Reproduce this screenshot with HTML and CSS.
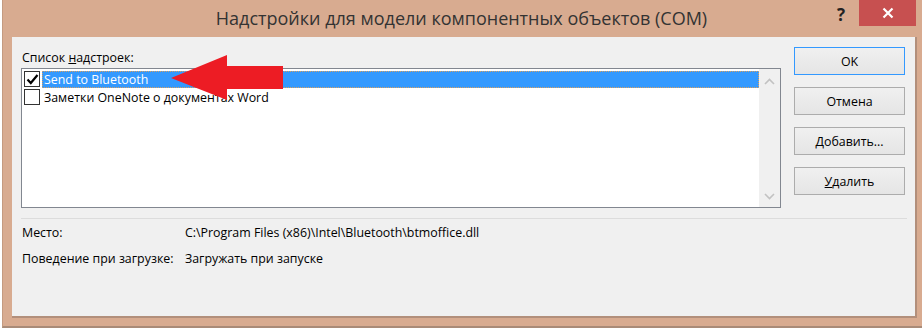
FILE: index.html
```html
<!DOCTYPE html>
<html lang="ru">
<head>
    <meta charset="UTF-8">
    <title>Надстройки для модели компонентных объектов (COM)</title>
    <link rel="stylesheet" href="styles.css">
</head>
<body>
    <div class="window">
        <div class="titlebar">
            <div></div>
            <div class="title">Надстройки для модели компонентных объектов (COM)</div>
            <div class="controls">
                <span class="help">?</span>
                <span class="close">
                    <svg width="12" height="12" viewBox="0 0 12 12"><path d="M1.5 1.5 L10.5 10.5 M10.5 1.5 L1.5 10.5" stroke="#fff" stroke-width="2.2"/></svg>
                </span>
            </div>
        </div>

        <div class="client">
            <div class="top">
                <div class="list-area">
                    <div class="list-label">Список <u>н</u>адстроек:</div>
                    <div class="listbox">
                        <div class="rows">
                            <div class="row">
                                <span class="check checked">
                                    <svg width="13" height="13" viewBox="0 0 13 13"><path d="M1.5 6.5 L4.8 10 L11.5 2" stroke="#000" stroke-width="2.2" fill="none"/></svg>
                                </span>
                                <span class="item selected">Send to Bluetooth</span>
                            </div>
                            <div class="row">
                                <span class="check"></span>
                                <span class="item">Заметки OneNote о документах Word</span>
                            </div>
                        </div>
                        <div class="scrollbar">
                            <svg width="11" height="7" viewBox="0 0 11 7"><path d="M1 6 L5.5 1.5 L10 6" stroke="#c2c2c2" stroke-width="1.6" fill="none"/></svg>
                            <svg width="11" height="7" viewBox="0 0 11 7"><path d="M1 1 L5.5 5.5 L10 1" stroke="#c2c2c2" stroke-width="1.6" fill="none"/></svg>
                        </div>
                    </div>
                </div>

                <div class="buttons">
                    <button class="default">OK</button>
                    <button>Отмена</button>
                    <button><u>Д</u>обавить...</button>
                    <button><u>У</u>далить</button>
                </div>
            </div>

            <div class="separator"></div>

            <div class="info">
                <div class="info-row">
                    <span class="info-name">Место:</span>
                    <span>C:\Program Files (x86)\Intel\Bluetooth\btmoffice.dll</span>
                </div>
                <div class="info-row">
                    <span class="info-name">Поведение при загрузке:</span>
                    <span>Загружать при запуске</span>
                </div>
            </div>
        </div>

        <!-- red annotation arrow drawn over the dialog -->
        <svg class="arrow" width="922" height="328" viewBox="0 0 922 328">
            <polygon points="171,78 227,55 227,66 283,66 283,89 227,89 227,100" fill="#ed1c24"/>
        </svg>
    </div>
</body>
</html>
```

FILE: styles.css
```css
body {
    margin: 0;
    font-family: 'Open Sans', 'Noto Sans', sans-serif;
    font-size: 12.4px;
    color: #000;
}

.window {
    position: relative;
    height: 328px;
    box-sizing: border-box;
    background-color: #d8ab90;
    border-left: 1px solid #c49a80;
    border-bottom: 2px solid #a98b78;
    margin-left: 2px;
    width: 920px;
}

.titlebar {
    height: 37px;
    display: grid;
    grid-template-columns: 1fr auto 1fr;
}

.title {
    font-size: 18px;
    color: #333;
    line-height: 37px;
    margin-left: -2px;
}

.controls {
    display: flex;
    justify-content: flex-end;
    align-items: flex-start;
}

.help {
    font-weight: bold;
    font-size: 17px;
    color: #222;
    line-height: 30px;
    margin-right: 14px;
}

.close {
    width: 57px;
    height: 26px;
    background-color: #c75050;
    display: flex;
    align-items: center;
    justify-content: center;
    margin-right: 6px;
}

.client {
    margin-left: 9px;
    width: 905px;
    height: 281px;
    box-sizing: border-box;
    background-color: #f0f0f0;
    border-right: 2px solid #b28f7b;
    border-bottom: 2px solid #b28f7b;
    padding: 10px 0 0 9px;
}

.top {
    display: grid;
    grid-template-columns: 760px 111px;
    gap: 13px;
}

.list-label {
    height: 21px;
    line-height: 21px;
    padding-left: 1px;
}

.listbox {
    height: 140px;
    box-sizing: border-box;
    border: 1px solid #828790;
    background-color: #fff;
    display: flex;
}

.rows {
    flex: 1;
    padding: 1px 0 0 2px;
}

.row {
    height: 18px;
    display: flex;
    align-items: center;
}

.check {
    width: 14px;
    height: 14px;
    border: 1px solid #333;
    background-color: #fff;
    display: flex;
    align-items: center;
    justify-content: center;
    margin-right: 2px;
}

.item {
    flex: 1;
    height: 17px;
    line-height: 17px;
    padding-left: 2px;
    box-sizing: border-box;
}

.item.selected {
    background-color: #3399ff;
    color: #fff;
    outline: 1px dotted #d9a060;
    outline-offset: -1px;
}

.scrollbar {
    width: 21px;
    background-color: #f0f0f0;
    display: flex;
    flex-direction: column;
    justify-content: space-between;
    align-items: center;
    padding: 9px 0 7px;
}

.buttons {
    display: flex;
    flex-direction: column;
    gap: 12px;
}

.buttons button {
    height: 28px;
    font-family: 'Open Sans', 'Noto Sans', sans-serif;
    font-size: 12.4px;
    color: #000;
    background: linear-gradient(#f0f0f0, #e5e5e5);
    border: 1px solid #acacac;
    padding: 0;
}

.buttons button.default {
    border-color: #3399ff;
}

.separator {
    height: 1px;
    background-color: #dcdcdc;
    width: 886px;
    margin-top: 10px;
}

.info {
    margin-top: 1px;
}

.info-row {
    height: 26px;
    line-height: 26px;
    display: flex;
    padding-left: 1px;
}

.info-name {
    width: 163px;
}

.arrow {
    position: absolute;
    left: -3px;
    top: 0;
    pointer-events: none;
}
```
